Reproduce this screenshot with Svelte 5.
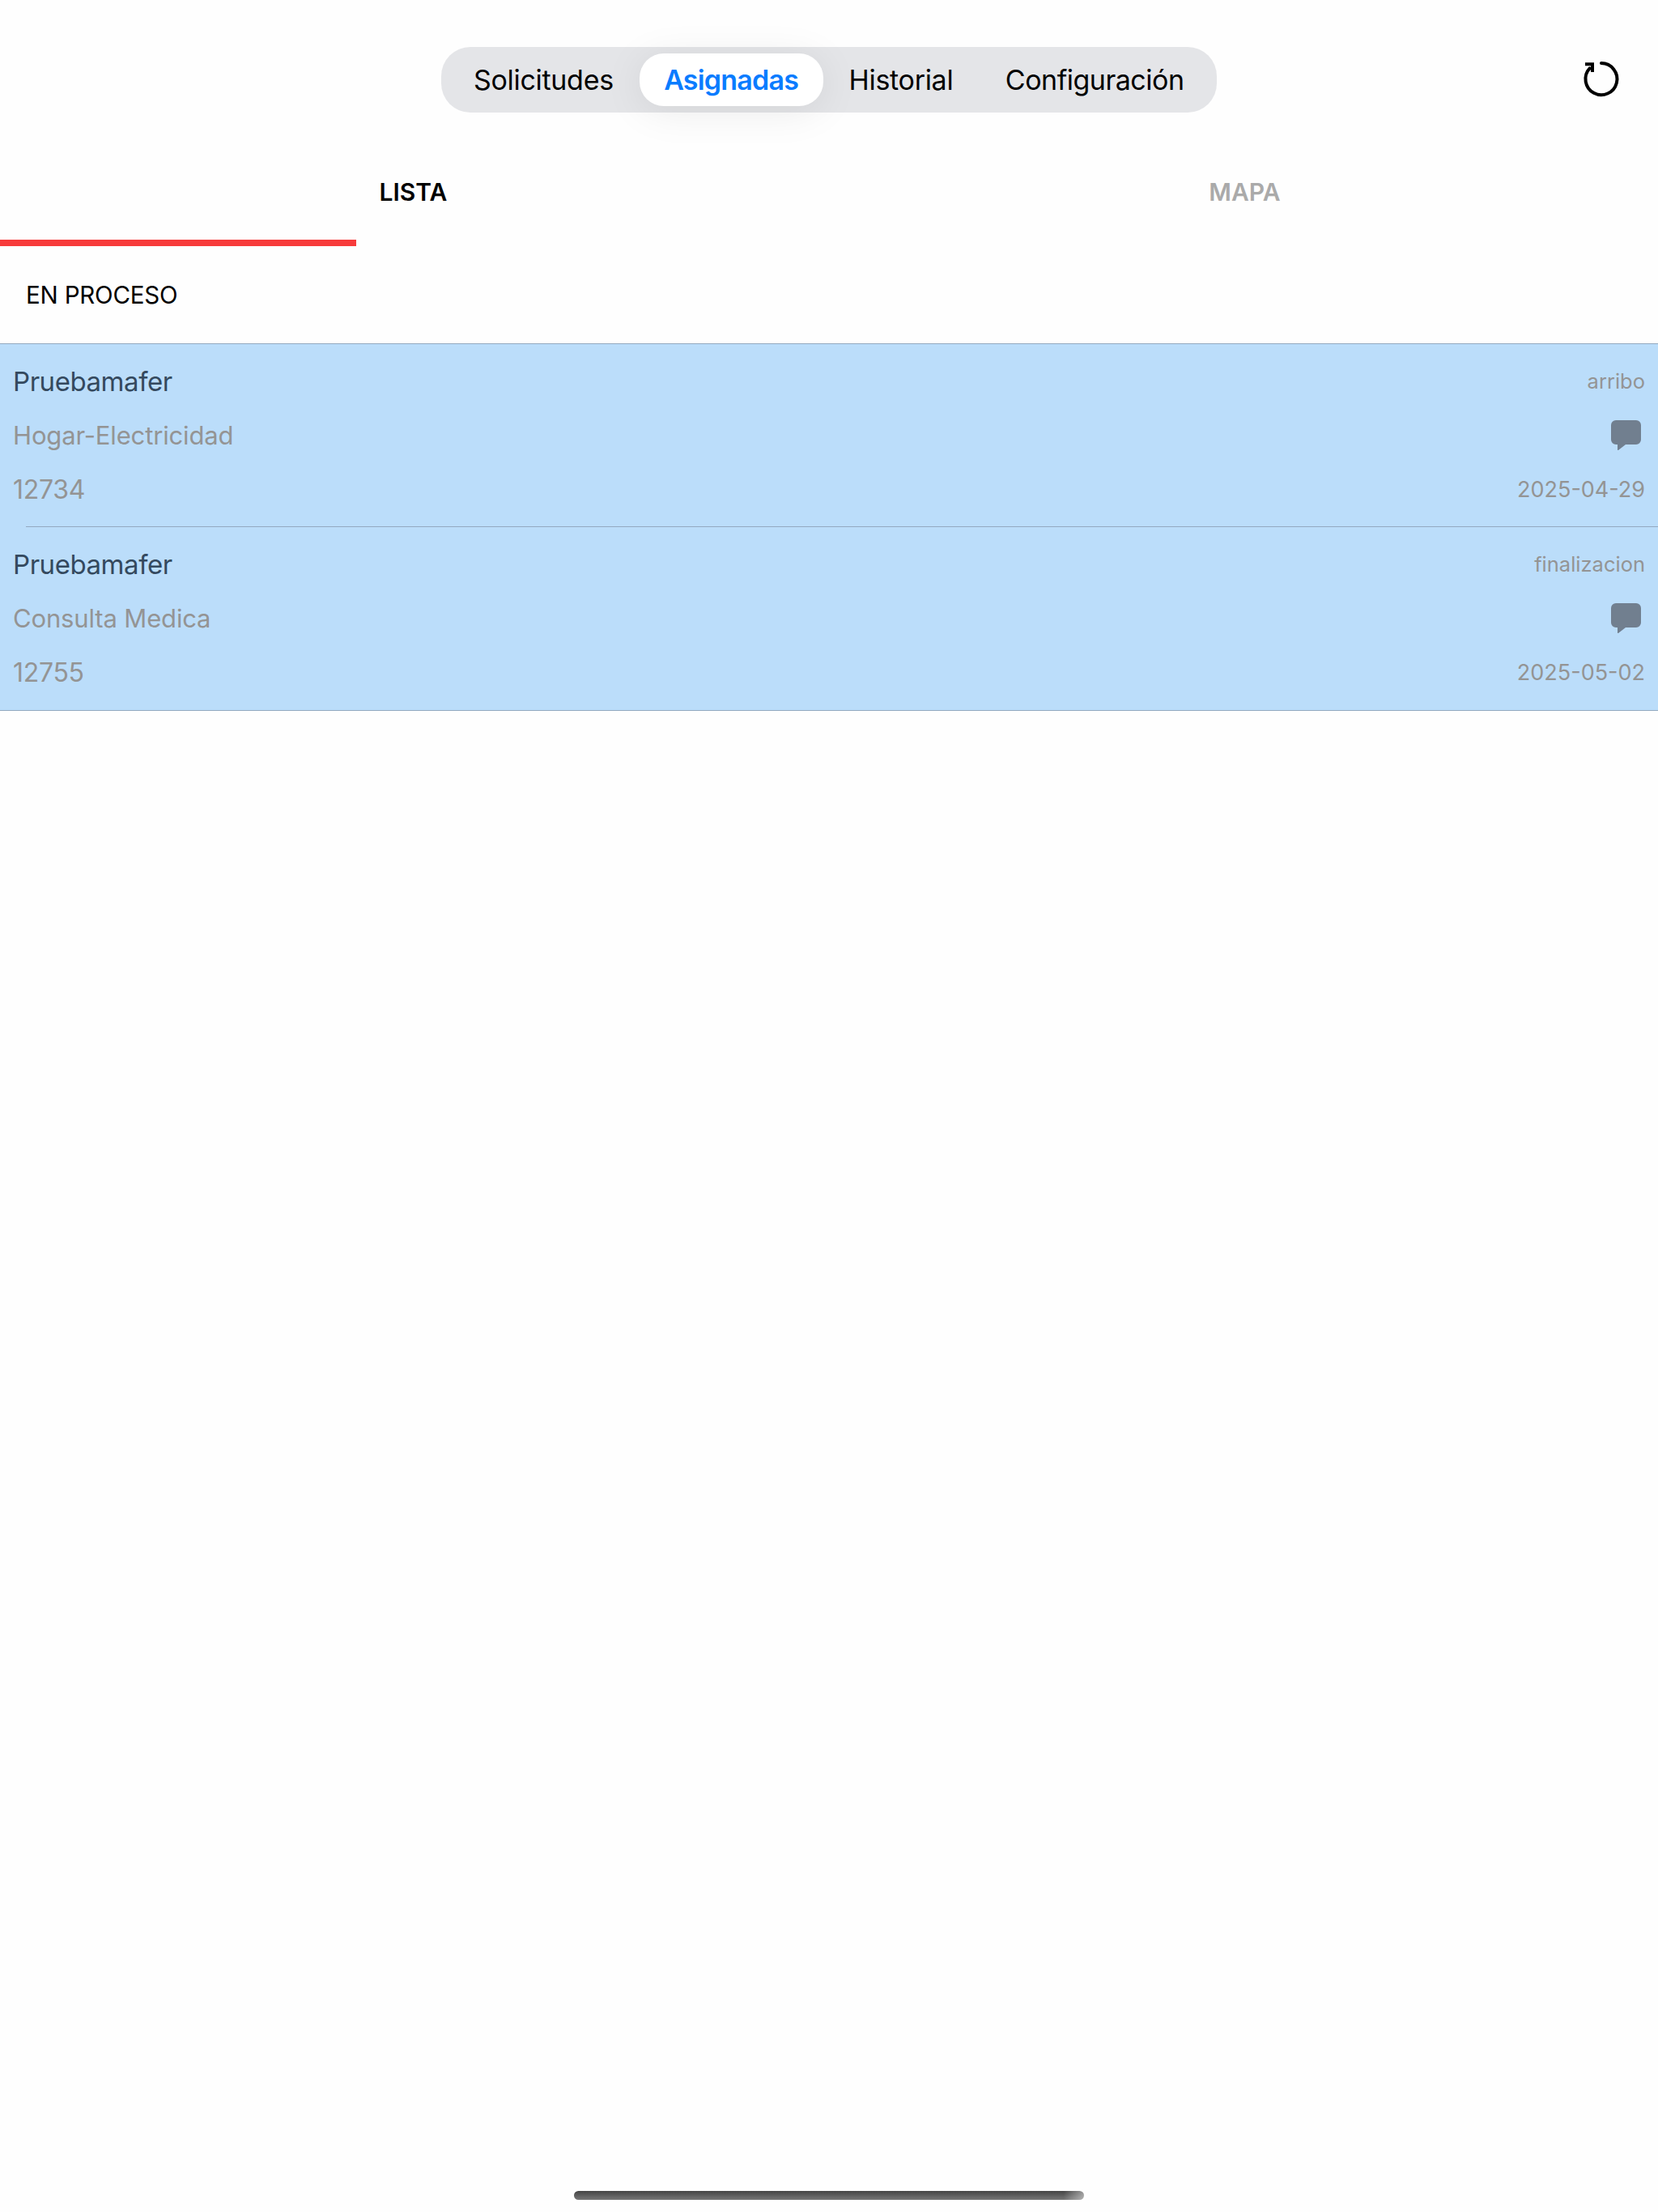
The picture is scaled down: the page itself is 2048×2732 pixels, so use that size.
<script>
  const segments = ['Solicitudes', 'Asignadas', 'Historial', 'Configuración'];
  const rows = [
    { name: 'Pruebamafer', status: 'arribo', type: 'Hogar-Electricidad', id: '12734', date: '2025-04-29' },
    { name: 'Pruebamafer', status: 'finalizacion', type: 'Consulta Medica', id: '12755', date: '2025-05-02' }
  ];
</script>

<div class="page">
  <header class="top">
    <div class="segmented">
      {#each segments as s, i}
        <div class="seg" class:active={i === 1}>{s}</div>
      {/each}
    </div>
    <svg class="refresh" width="50" height="50" viewBox="0 0 50 50" fill="none" stroke="#000" stroke-width="4" stroke-linecap="round">
      <path d="M25 5.1A19.5 19.5 0 1 1 10.6 11.4" />
      <path d="M5 6.3H14V16" stroke-linecap="butt" stroke-linejoin="miter" />
    </svg>
  </header>

  <nav class="tabs">
    <div class="tab on">LISTA</div>
    <div class="tab">MAPA</div>
    <div class="indicator"></div>
  </nav>

  <div class="section">EN PROCESO</div>

  <ul class="list">
    {#each rows as r}
      <li class="row">
        <div class="line"><span class="name">{r.name}</span><span class="status">{r.status}</span></div>
        <div class="line">
          <span class="type">{r.type}</span>
          <svg class="bubble" width="37" height="37" viewBox="0 0 37 37"><path d="M6 0H31A6 6 0 0 1 37 6V24A6 6 0 0 1 31 30H18L9 37Q8 37.5 8 36V30H6A6 6 0 0 1 0 24V6A6 6 0 0 1 6 0Z" fill="#717f8f"/></svg>
        </div>
        <div class="line"><span class="code">{r.id}</span><span class="date">{r.date}</span></div>
        <div class="divider"></div>
      </li>
    {/each}
  </ul>

  <div class="spacer"></div>
  <div class="home"></div>
</div>

<style>
  :global(body) { margin: 0; background: #fefefe; }
  .page {
    width: 2048px; height: 2732px; display: flex; flex-direction: column;
    font-family: Inter, "Liberation Sans", sans-serif; background: #fefefe; overflow: hidden;
  }
  .top { height: 196px; flex: none; padding-top: 58px; box-sizing: border-box; display: flex; justify-content: center; position: relative; }
  .segmented {
    width: 958px; height: 81px; box-sizing: border-box; background: #e4e5e8; border-radius: 36px;
    display: flex; align-items: center; padding: 0 8px; justify-content: flex-start;
  }
  .seg {
    height: 65px; box-sizing: border-box; padding-bottom: 1px; display: flex; align-items: center; justify-content: center;
    font-size: 34px; font-weight: 400; color: #000; letter-spacing: -0.3px;
  }
  .seg:nth-child(1) { width: 237px; }
  .seg:nth-child(2) { width: 227px; }
  .seg:nth-child(3) { width: 193px; }
  .seg:nth-child(4) { width: 286px; letter-spacing: -0.5px; }
  .seg.active {
    background: #fff; color: #0a7cff; font-weight: 600; border-radius: 30px; letter-spacing: -0.8px;
    box-shadow: 0 6px 50px rgba(0, 0, 0, 0.08);
  }
  .refresh { position: absolute; left: 1953px; top: 73px; }
  .tabs { height: 108px; flex: none; display: flex; position: relative; }
  .tab {
    flex: 1; text-align: center; padding-top: 24px; line-height: 34px; font-size: 30px; font-weight: 600;
    color: #aaa;
  }
  .tab.on { color: #000; padding-right: 3px; }
  .tab:not(.on) { padding-left: 3px; }
  .indicator { position: absolute; left: 0; top: 100px; width: 440px; height: 8px; background: #f73b3b; }
  .section { height: 120px; flex: none; box-sizing: border-box; padding: 0 32px; display: flex; align-items: center; font-size: 29.5px; color: #000; letter-spacing: -0.2px; }
  .list { margin: 0; padding: 0; list-style: none; background: #bbddfa; border-top: 1px solid #93a9c0; border-bottom: 1px solid #93a9c0; }
  .row { padding: 12px 16px 0; height: 226px; box-sizing: border-box; position: relative; }
  .line { height: 67px; display: flex; justify-content: space-between; align-items: center; }
  .name { font-size: 33px; color: #34495e; letter-spacing: -0.45px; }
  .type { font-size: 31px; color: #949494; letter-spacing: -0.15px; }
  .code { font-size: 32px; color: #949494; letter-spacing: -0.3px; }
  .status { font-size: 25.5px; color: #949494; }
  .date { font-size: 27px; color: #949494; }
  .bubble { margin: 0 5px 0 0; }
  .divider { position: absolute; left: 32px; right: 0; bottom: 0; height: 1px; background: #93a9c0; }
  .row:last-child .divider { display: none; }
  .spacer { flex: 1; }
  .home { flex: none; width: 630px; height: 11px; margin: 0 auto 15px; border-radius: 6px; background: linear-gradient(90deg, transparent 96%, rgba(255,255,255,.45)), linear-gradient(#444, #777); }
</style>
